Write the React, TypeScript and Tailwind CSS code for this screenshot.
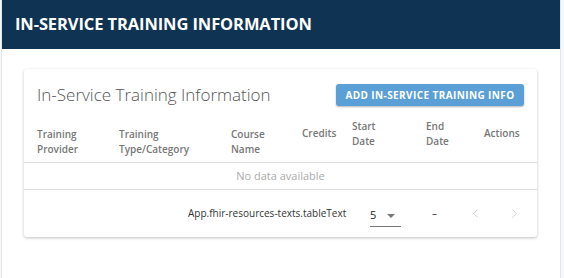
import { ChevronLeft, ChevronRight } from "lucide-react";

const cols = [
  { label: ["Training", "Provider"], w: "w-[82px]", up: false },
  { label: ["Training", "Type/Category"], w: "w-[112px]", up: false },
  { label: ["Course", "Name"], w: "w-[71px]", up: false },
  { label: ["Credits"], w: "w-[50px]", up: true },
  { label: ["Start", "Date"], w: "w-[74px]", up: true },
  { label: ["End", "Date"], w: "w-[58px]", up: true },
  { label: ["Actions"], w: "w-[50px]", up: true },
];

export default function App() {
  return (
    <div
      className="w-[564px] h-[278px] overflow-hidden bg-[#f5f7fa] pl-px"
      style={{ fontFamily: '"Open Sans", sans-serif' }}
    >
      <div className="w-[560px] h-full border-x border-[#e2e6eb] bg-white">
        <div className="h-[49px] bg-[#0f3352] px-[13px] flex items-center">
          <h1 className="text-[16.5px] font-bold text-white tracking-[-0.1px]">IN-SERVICE TRAINING INFORMATION</h1>
        </div>

        <div className="pt-[20px] pl-[22px]">
          <div className="w-[513px] h-[168px] rounded-[3px] bg-white shadow-[0_1px_3px_rgba(0,0,0,0.25)]">
            <div className="h-[46px] flex items-center justify-between pl-[13px] pr-[13px] pt-[6px]">
              <span className="text-[17px] font-light text-[#555]">In-Service Training Information</span>
              <button
                type="button"
                className="h-[22px] w-[188px] rounded-[3px] bg-[#5a9fd5] text-[10px] font-bold text-white tracking-[0.4px] shadow-[0_1px_2px_rgba(0,0,0,0.3)]"
              >
                ADD IN-SERVICE TRAINING INFO
              </button>
            </div>

            <div className="h-[48px] flex items-center pl-[13px] border-b border-[#e0e0e0]">
              {cols.map((c) => (
                <div
                  key={c.label.join(" ")}
                  className={`${c.w} text-[10px] leading-[15px] font-semibold text-[#777] ${c.up ? "pb-[10px]" : "pt-[6px]"}`}
                >
                  {c.label.map((l) => (
                    <div key={l}>{l}</div>
                  ))}
                </div>
              ))}
            </div>

            <div className="h-[27px] flex items-center justify-center border-b border-[#e0e0e0] text-[11px] text-[#aaa]">
              No data available
            </div>

            <div className="h-[46px] flex items-center text-[10px] text-[#333] pl-[164px]">
              <span className="w-[182px]">App.fhir-resources-texts.tableText</span>
              <div className="w-[31px] h-[22px] mt-[6px] border-b border-[#777] flex items-center justify-between pr-[6px] text-[11px] text-[#222]">
                <span>5</span>
                <span className="border-x-[4px] border-t-[4px] border-x-transparent border-t-[#777]" />
              </div>
              <span className="ml-[31px] text-[#333]">–</span>
              <ChevronLeft className="ml-[31px] h-[15px] w-[15px] text-[#ccc]" strokeWidth={1.5} />
              <ChevronRight className="ml-[24px] h-[15px] w-[15px] text-[#ccc]" strokeWidth={1.5} />
            </div>
          </div>
        </div>
      </div>
    </div>
  );
}
